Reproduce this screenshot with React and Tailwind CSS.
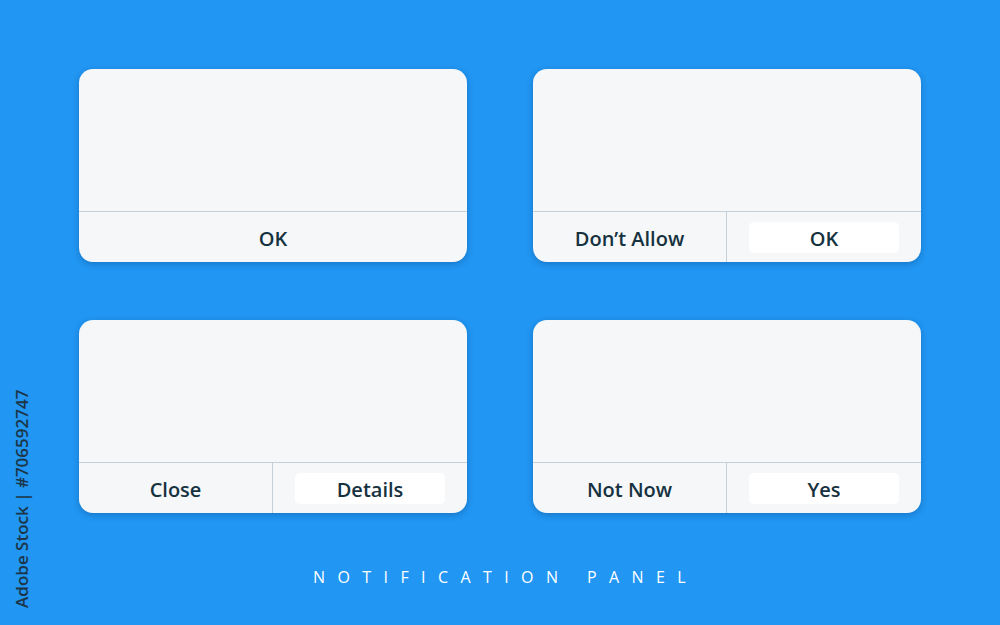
import React from "react";

const panels = [
  { buttons: ["OK"] },
  { buttons: ["Don’t Allow", "OK"] },
  { buttons: ["Close", "Details"] },
  { buttons: ["Not Now", "Yes"] },
];

const Panel = ({ buttons }) => {
  const [first, second] = buttons;

  return (
    <div className="flex h-[193px] w-[388px] flex-col overflow-hidden rounded-[14px] bg-[#f5f7f9] shadow-[0_2px_6px_rgba(10,60,120,0.35)]">
      <div className="flex-1 border-b border-[#c3cfd9]" />
      {second ? (
        <div className="flex h-[50px]">
          <div className="flex w-1/2 items-center justify-center border-r border-[#c3cfd9] pt-[3px] text-[20px] font-semibold text-[#17323f]">
            {first}
          </div>
          <div className="flex w-1/2 items-start px-[22px] pt-[10px]">
            <div className="flex h-[31px] w-full items-center justify-center rounded-[5px] bg-white pt-[2px] text-[20px] font-semibold text-[#17323f]">
              {second}
            </div>
          </div>
        </div>
      ) : (
        <div className="flex h-[50px] items-center justify-center pt-[3px] text-[20px] font-semibold text-[#17323f]">
          {first}
        </div>
      )}
    </div>
  );
};

const App = () => {
  return (
    <div className="relative flex h-[625px] w-[1000px] flex-col items-center overflow-hidden bg-[#2196f2] pt-[69px] font-['Open_Sans',sans-serif]">
      <div className="grid grid-cols-[388px_388px] gap-x-[66px] gap-y-[58px]">
        {panels.map((panel, i) => (
          <Panel key={i} buttons={panel.buttons} />
        ))}
      </div>

      <p className="mt-[54px] pl-[11px] text-[16px] leading-5 tracking-[0.775em] text-white">
        NOTIFICATION PANEL
      </p>

      <div className="absolute left-[12px] top-[388px] flex h-[221px] w-[20px] items-center justify-center">
        <span className="-rotate-90 whitespace-nowrap text-[17px] font-semibold text-[#1c3547]">
          Adobe Stock | #706592747
        </span>
      </div>
    </div>
  );
};

export default App;
